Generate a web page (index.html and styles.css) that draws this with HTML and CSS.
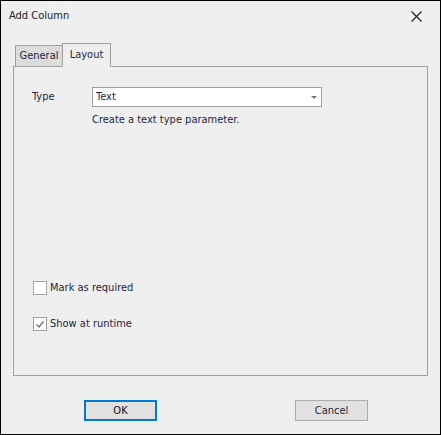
FILE: index.html
```html
<!DOCTYPE html>
<html lang="en">
<head>
<meta charset="utf-8">
<meta name="viewport" content="width=device-width, initial-scale=1">
<title>Add Column</title>
<link rel="stylesheet" href="styles.css">
</head>
<body>
<main class="dialog">
  <header class="titlebar">
    <h1 class="title">Add Column</h1>
    <button class="close" type="button" aria-label="Close">
      <svg width="11" height="11" viewBox="0 0 11 11" aria-hidden="true"><path d="M.5 .5l10 10M10.5 .5l-10 10" fill="none" stroke="#222" stroke-width="1.2"/></svg>
    </button>
  </header>
  <form class="form">
    <div class="tabs" role="tablist">
      <button class="tab" type="button" role="tab" aria-selected="false">General</button>
      <button class="tab tab-active" type="button" role="tab" aria-selected="true">Layout</button>
    </div>
    <section class="panel" role="tabpanel">
      <div class="field">
        <label class="label" for="type">Type</label>
        <div class="select-wrap">
          <select class="select" id="type"><option>Text</option></select>
          <svg class="arrow" width="6" height="3" viewBox="0 0 6 3" aria-hidden="true"><path d="M0 0h6L3 3z" fill="#777"/></svg>
        </div>
        <p class="hint">Create a text type parameter.</p>
      </div>
      <div class="checks">
        <label class="check"><input class="box" type="checkbox"><svg class="tick" width="14" height="14" viewBox="0 0 14 14" aria-hidden="true"><path d="M3.5 7.5l2.5 2.5L10.5 4.5" fill="none" stroke="#777" stroke-width="1.5"/></svg>Mark as required</label>
        <label class="check"><input class="box" type="checkbox" checked><svg class="tick" width="14" height="14" viewBox="0 0 14 14" aria-hidden="true"><path d="M3.5 7.5l2.5 2.5L10.5 4.5" fill="none" stroke="#777" stroke-width="1.5"/></svg>Show at runtime</label>
      </div>
    </section>
    <footer class="actions">
      <button class="button button-default" type="button">OK</button>
      <button class="button" type="button">Cancel</button>
    </footer>
  </form>
</main>
</body>
</html>
```
FILE: styles.css
```css
* {
  box-sizing: border-box;
}

body {
  margin: 0;
  background: #efefef;
  color: #26263a;
  font: 11px/14px "DejaVu Sans Condensed", "Noto Sans", sans-serif;
}

button,
select,
input {
  margin: 0;
  font: inherit;
  color: inherit;
}

.dialog {
  display: flex;
  flex-direction: column;
  min-height: 100vh;
  border: 1px solid #000;
}

.titlebar {
  display: flex;
  align-items: center;
  justify-content: space-between;
  padding: 8px 18px 0 8px;
  margin-bottom: 20px;
}

.title {
  margin: 0;
  font-size: 11px;
  font-weight: 400;
  color: #222;
}

.close {
  display: flex;
  padding: 0;
  border: 0;
  background: none;
}

.form {
  display: flex;
  flex: 1;
  flex-direction: column;
}

.tabs {
  display: flex;
  align-items: flex-end;
  padding-left: 14px;
  margin: 0 0 -1px;
}

.tab {
  width: 48px;
  height: 22px;
  padding: 0;
  border: 1px solid #a0a0a0;
  background: #dcdcdc;
}

.tab-active {
  width: 49px;
  height: 24px;
  margin-left: -1px;
  border-bottom-color: #efefef;
  background: #efefef;
  z-index: 1;
}

.panel {
  display: flex;
  flex: 1;
  flex-direction: column;
  justify-content: space-between;
  margin: 0 12px;
  padding: 20px 18px 44px;
  border: 1px solid #a0a0a0;
}

.field {
  display: grid;
  grid-template-columns: 60px minmax(0, 230px);
  row-gap: 6px;
  align-items: center;
}

.select-wrap {
  display: grid;
  align-items: center;
}

.select {
  grid-area: 1 / 1;
  width: 100%;
  height: 20px;
  padding: 0 3px;
  border: 1px solid #a0a0a0;
  border-radius: 0;
  background: #fff;
  appearance: none;
}

.arrow {
  grid-area: 1 / 1;
  justify-self: end;
  margin-right: 5px;
  pointer-events: none;
}

.hint {
  grid-column: 2;
  margin: 0;
}

.checks {
  display: grid;
  gap: 22px;
  padding-left: 1px;
}

.check {
  display: grid;
  grid-template-columns: 14px auto;
  column-gap: 3px;
  justify-content: start;
}

.box {
  grid-area: 1 / 1;
  width: 14px;
  height: 14px;
  border: 1px solid #a0a0a0;
  background: #fff;
  appearance: none;
}

.tick {
  grid-area: 1 / 1;
  visibility: hidden;
}

.box:checked + .tick {
  visibility: visible;
}

.actions {
  display: flex;
  justify-content: space-between;
  padding: 24px 72px 13px 83px;
}

.button {
  width: 73px;
  height: 21px;
  padding: 0;
  border: 1px solid #adadad;
  background: #e1e1e1;
}

.button-default {
  border: 2px solid #0078d7;
  color: #111;
}
```
